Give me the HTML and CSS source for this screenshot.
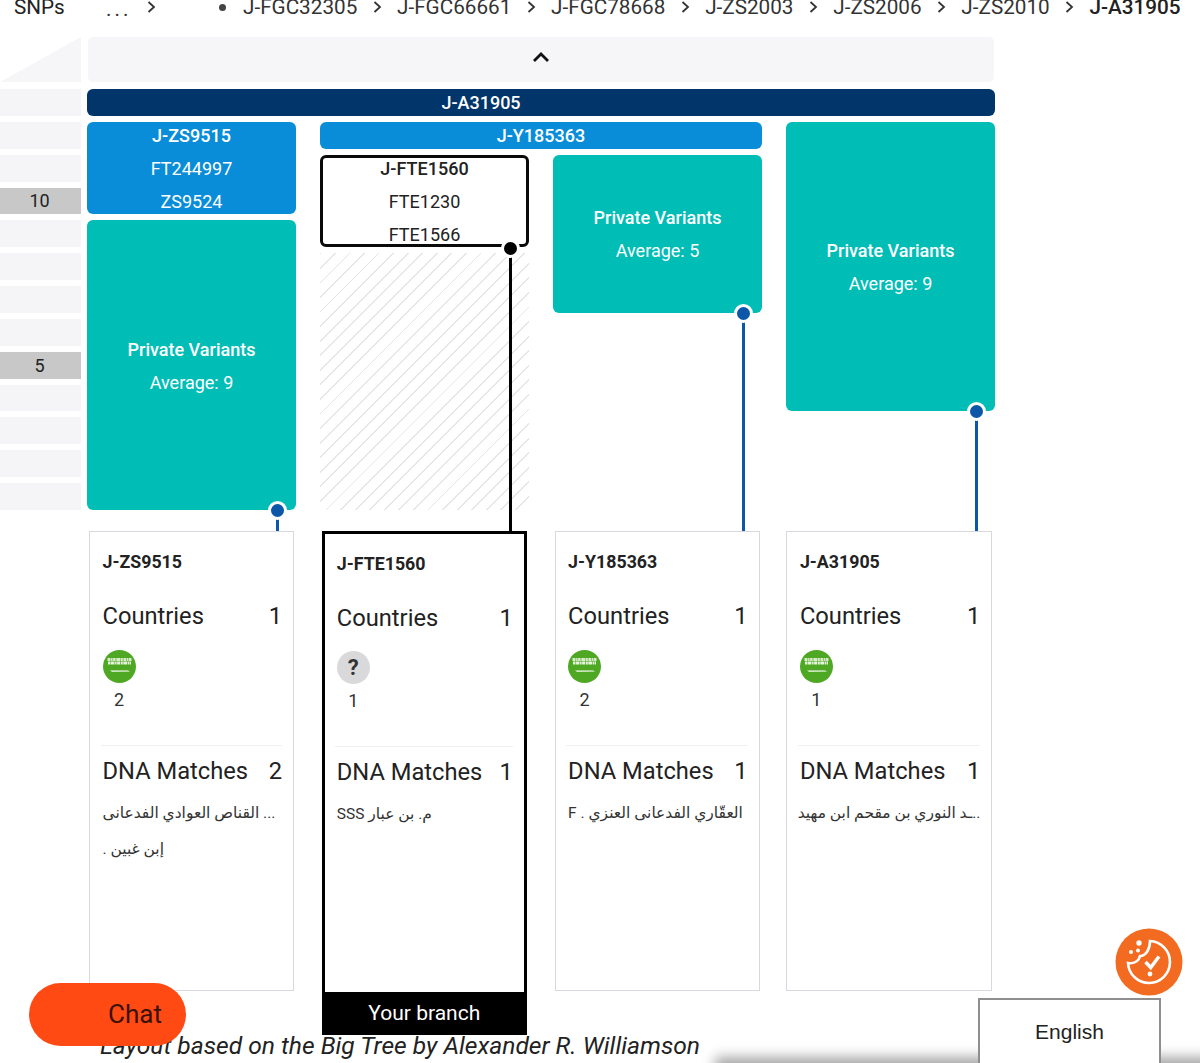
FILE: index.html
```html
<!DOCTYPE html>
<html lang="en">
<head>
<meta charset="utf-8">
<title>Big Tree</title>
<link rel="stylesheet" href="styles.css">
</head>
<body>
<svg class="defs" width="0" height="0" aria-hidden="true">
  <symbol id="chev" viewBox="0 0 9 14"><path d="M1.5 2 L7 7 L1.5 12" fill="none" stroke="currentColor" stroke-width="1.8"/></symbol>
  <symbol id="flag" viewBox="0 0 33 33">
    <circle cx="16.5" cy="16.5" r="16.5" fill="#4fa823"/>
    <path d="M4.5 9.5h24" stroke="#d8ecca" stroke-width="3" stroke-dasharray="3 .6 1.5 .5 2.5 .7 4 .5 2 .6"/>
    <path d="M5 13h23" stroke="#e6f3dc" stroke-width="3.2" stroke-dasharray="2 .5 4 .6 1.5 .5 3 .7"/>
    <path d="M7 20.6 H25 L27 21.6 L9 21.8Z" fill="#fff"/>
  </symbol>
</svg>

<nav class="crumbs">
  <span class="crumb-snps">SNPs</span>
  <span class="crumb-dots">...</span>
  <svg class="chev"><use href="#chev"/></svg>
  <span class="crumb-bullet"></span>
  <span>J-FGC32305</span>
  <svg class="chev"><use href="#chev"/></svg>
  <span>J-FGC66661</span>
  <svg class="chev"><use href="#chev"/></svg>
  <span>J-FGC78668</span>
  <svg class="chev"><use href="#chev"/></svg>
  <span>J-ZS2003</span>
  <svg class="chev"><use href="#chev"/></svg>
  <span>J-ZS2006</span>
  <svg class="chev"><use href="#chev"/></svg>
  <span>J-ZS2010</span>
  <svg class="chev"><use href="#chev"/></svg>
  <span class="crumb-current">J-A31905</span>
</nav>

<section class="tree">
  <aside class="side">
    <div class="side-wedge"></div>
    <div class="side-rows">
      <div class="side-row"></div>
      <div class="side-row"></div>
      <div class="side-row"></div>
      <div class="side-row side-row-on">10</div>
      <div class="side-row"></div>
      <div class="side-row"></div>
      <div class="side-row"></div>
      <div class="side-row"></div>
      <div class="side-row side-row-on">5</div>
      <div class="side-row"></div>
      <div class="side-row"></div>
      <div class="side-row"></div>
      <div class="side-row"></div>
    </div>
  </aside>
  <div class="main">
    <div class="collapse">
      <svg class="collapse-icon" viewBox="0 0 18 12"><path d="M2 10 L9 3 L16 10" fill="none" stroke="#111" stroke-width="2.8"/></svg>
    </div>
    <div class="blocks">
      <div class="block navy b-root">J-A31905</div>
      <div class="block blue b-zs">
        <span>J-ZS9515</span>
        <span class="light">FT244997</span>
        <span class="light">ZS9524</span>
      </div>
      <div class="block teal b-zs-private">
        <span>Private Variants</span>
        <span>Average: 9</span>
        <i class="stem stem-a"></i><i class="dot"></i>
      </div>
      <div class="block blue b-y">J-Y185363</div>
      <div class="block outlined b-fte">
        <span class="strong">J-FTE1560</span>
        <span>FTE1230</span>
        <span>FTE1566</span>
        <i class="stem stem-b"></i><i class="dot dot-black"></i>
      </div>
      <div class="hatch b-hatch"></div>
      <div class="block teal b-y-private">
        <span>Private Variants</span>
        <span>Average: 5</span>
        <i class="stem stem-c"></i><i class="dot"></i>
      </div>
      <div class="block teal b-a-private">
        <span>Private Variants</span>
        <span>Average: 9</span>
        <i class="stem stem-d"></i><i class="dot"></i>
      </div>
    </div>
  </div>
</section>

<section class="cards">
  <article class="card">
    <h3 class="card-title">J-ZS9515</h3>
    <div class="stat"><span>Countries</span><span>1</span></div>
    <div class="country"><svg class="flag"><use href="#flag"/></svg><span>2</span></div>
    <hr class="rule">
    <div class="stat"><span>DNA Matches</span><span>2</span></div>
    <p class="match" dir="rtl">... القناص العوادي الفدعانى</p>
    <p class="match" dir="rtl">إبن غبين .</p>
  </article>
  <div class="card-wrap">
    <article class="card card-own">
      <h3 class="card-title">J-FTE1560</h3>
      <div class="stat"><span>Countries</span><span>1</span></div>
      <div class="country"><span class="unknown">?</span><span>1</span></div>
      <hr class="rule">
      <div class="stat"><span>DNA Matches</span><span>1</span></div>
      <p class="match" dir="rtl">م. بن عبار SSS</p>
    </article>
    <div class="branch-label">Your branch</div>
  </div>
  <article class="card">
    <h3 class="card-title">J-Y185363</h3>
    <div class="stat"><span>Countries</span><span>1</span></div>
    <div class="country"><svg class="flag"><use href="#flag"/></svg><span>2</span></div>
    <hr class="rule">
    <div class="stat"><span>DNA Matches</span><span>1</span></div>
    <p class="match" dir="rtl">العقّاري الفدعانى العنزي . F</p>
  </article>
  <article class="card card-last">
    <h3 class="card-title">J-A31905</h3>
    <div class="stat"><span>Countries</span><span>1</span></div>
    <div class="country"><svg class="flag"><use href="#flag"/></svg><span>1</span></div>
    <hr class="rule">
    <div class="stat"><span>DNA Matches</span><span>1</span></div>
    <p class="match" dir="rtl">..ـد النوري بن مقحم ابن مهيد</p>
  </article>
</section>

<footer class="credit">Layout based on the Big Tree by Alexander R. Williamson</footer>

<button class="chat">Chat</button>

<svg class="cookie" viewBox="0 0 68 68" aria-label="Cookie settings">
  <circle cx="34" cy="34" r="33.5" fill="#f26b21"/>
  <path d="M35 13 A21 21 0 1 1 13 35 C19 36 24 33 25 28 C31 28 35 21 35 13Z" fill="none" stroke="#fff" stroke-width="2.6"/>
  <circle cx="24" cy="15" r="2.7" fill="#fff"/>
  <circle cx="16" cy="24" r="2" fill="#fff"/>
  <circle cx="23" cy="22.5" r="2" fill="#fff"/>
  <path d="M30.5 34 L35.7 39.5 L44 28.5" fill="none" stroke="#fff" stroke-width="3.4"/>
  <circle cx="35" cy="46" r="2.4" fill="#fff"/>
</svg>

<div class="lang">English</div>
<div class="bottom-shade"></div>
</body>
</html>
```
FILE: styles.css
```css
* { box-sizing: border-box; }
html, body { margin: 0; height: 100%; }
body {
  position: relative;
  height: 1063px;
  overflow: hidden;
  background: #fff;
  color: #222;
  font-family: Roboto, "DejaVu Sans", sans-serif;
}
.defs { position: absolute; }

.crumbs {
  display: flex;
  align-items: center;
  height: 24px;
  margin-top: -5px;
  padding-left: 14px;
  font-size: 20.7px;
  color: #333;
  white-space: nowrap;
}
.crumbs .chev { width: 9px; height: 14px; margin: 0 15.4px; color: #333; flex: none; }
.crumb-snps { color: #222; width: 92px; }
.crumb-dots { width: 26px; margin-top: 4px; letter-spacing: 3px; }
.crumbs .crumb-dots + .chev { margin: 0 0 0 15px; }
.crumb-bullet { width: 7px; height: 7px; border-radius: 50%; background: #444; margin: 0 17px 0 63px; }
.crumb-current { font-weight: 500; color: #222; }

.tree { display: flex; margin-top: 18px; }
.side { width: 81px; margin-right: 6px; flex: none; }
.side-wedge {
  height: 45px;
  margin-bottom: 7px;
  background: #f6f6f8;
  clip-path: polygon(0 100%, 100% 0, 100% 100%);
}
.side-rows { display: grid; grid-template-rows: repeat(13, 26.85px); row-gap: 6px; }
.side-row {
  background: #f5f5f7;
  display: flex;
  align-items: center;
  justify-content: center;
  padding-right: 2px;
  font-size: 18px;
  color: #222;
}
.side-row-on { background: #c8c8c8; }

.main { width: 908px; flex: none; }
.collapse {
  height: 45px;
  margin: 0 1px 7px;
  background: #f6f6f9;
  border-radius: 5px;
  display: flex;
  align-items: center;
  justify-content: center;
}
.collapse-icon { width: 18px; height: 12px; margin-top: -6px; }

.blocks {
  display: grid;
  grid-template-columns: repeat(4, 209px);
  grid-template-rows: repeat(13, 26.85px);
  column-gap: 24px;
  row-gap: 6px;
}
.block {
  position: relative;
  display: flex;
  flex-direction: column;
  align-items: center;
  justify-content: center;
  padding-top: 1px;
  border-radius: 6px;
  font-size: 18px;
  line-height: 33px;
  font-weight: 500;
  color: #fff;
}
.light { font-weight: 400; }
.navy { background: #02356a; padding-right: 120px; }
.blue { background: #0a8dd8; }
.teal { background: #00bdb6; font-weight: 500; }
.teal span + span { font-weight: 400; }
.outlined { background: #fff; color: #222; border: 3px solid #0a0a0a; font-weight: 400; padding-top: 2px; }
.strong { font-weight: 500; }

.b-root { grid-column: 1 / 5; grid-row: 1; }
.b-zs { grid-column: 1; grid-row: 2 / 5; }
.b-zs-private { grid-column: 1; grid-row: 5 / 14; }
.b-y { grid-column: 2 / 4; grid-row: 2; }
.b-fte { grid-column: 2; grid-row: 3 / 6; }
.b-hatch { grid-column: 2; grid-row: 6 / 14; }
.b-y-private { grid-column: 3; grid-row: 3 / 8; }
.b-a-private { grid-column: 4; grid-row: 2 / 11; }

.hatch {
  background: repeating-linear-gradient(-45deg, transparent 0 9px, #e6e6e6 9px 10.3px);
}

.dot {
  position: absolute;
  right: 9px;
  bottom: -10px;
  width: 19px;
  height: 19px;
  border-radius: 50%;
  background: #0d57a8;
  border: 3px solid #fff;
}
.dot-black { background: #000; right: 6px; bottom: -14px; }
.stem {
  position: absolute;
  right: 17px;
  top: 100%;
  width: 3px;
  background: #0d57a8;
}
.stem-a { height: 21px; }
.stem-c { height: 218px; }
.stem-d { height: 120px; }
.stem-b { background: #000; right: 14px; top: calc(100% + 3px); height: 284px; }

.cards {
  display: grid;
  grid-template-columns: repeat(4, 209px);
  column-gap: 23.8px;
  align-items: start;
  margin: 21px 0 0 87px;
}
.card {
  height: 460px;
  margin: 0 2px;
  padding: 18px 11px 0 12.5px;
  border: 1.5px solid #d8d8de;
  background: #fff;
}
.card-last { margin-left: 1px; }
.card-own { border: 3px solid #000; border-bottom: 0; padding: 18px 11px 0 12px; height: 461px; }
.card-own .country { margin-top: 18px; }
.card-title { margin: 0 0 27px; font-size: 17.8px; line-height: 24px; font-weight: 700; color: #222; }
.stat {
  display: flex;
  justify-content: space-between;
  font-size: 23.7px;
  line-height: 30px;
  color: #222;
}
.country {
  display: flex;
  flex-direction: column;
  align-items: center;
  width: 33px;
  margin-top: 19px;
  font-size: 18px;
  line-height: 24px;
  height: 95px;
  color: #333;
}
.flag { width: 33px; height: 33px; margin-bottom: 5px; flex: none; }
.unknown {
  width: 33px;
  height: 33px;
  margin-bottom: 5px;
  border-radius: 50%;
  background: #d9d9dc;
  font-size: 22px;
  line-height: 33px;
  font-weight: 700;
  text-align: center;
  color: #333;
  flex: none;
}
.rule { height: 1px; margin: 0 0 10px -2px; border: 0; background: #f0f0f2; }
.match {
  margin: 15px 0 0;
  font-size: 15.5px;
  line-height: 24px;
  height: 24px;
  text-align: left;
  color: #333;
  white-space: nowrap;
}
.match + .match { margin-top: 12px; }
.branch-label {
  margin: 0 2px;
  height: 43px;
  background: #000;
  color: #fff;
  font-size: 21px;
  line-height: 43px;
  text-align: center;
}

.credit {
  margin-top: -1px;
  padding-left: 100px;
  font-size: 24.6px;
  line-height: 24px;
  font-style: italic;
  color: #222;
}

.chat {
  position: absolute;
  left: 29px;
  top: 983px;
  width: 157px;
  height: 63px;
  padding: 0 0 0 79px;
  border: 0;
  border-radius: 32px;
  background: #ff4a14;
  color: #3a1208;
  font: 26px/63px Roboto, sans-serif;
  text-align: left;
}
.cookie { position: absolute; left: 1115px; top: 928px; width: 68px; height: 68px; }
.lang {
  position: absolute;
  left: 978px;
  top: 998px;
  width: 183px;
  height: 80px;
  padding-top: 19px;
  border: 2px solid #8e8e8e;
  background: #fff;
  color: #222;
  font: 21px/26px "Liberation Sans", sans-serif;
  text-align: center;
  z-index: 2;
}
.bottom-shade {
  position: absolute;
  left: 720px;
  right: -30px;
  top: 1064px;
  height: 30px;
  box-shadow: 0 -2px 12px 5px rgba(0,0,0,.35);
}
```
